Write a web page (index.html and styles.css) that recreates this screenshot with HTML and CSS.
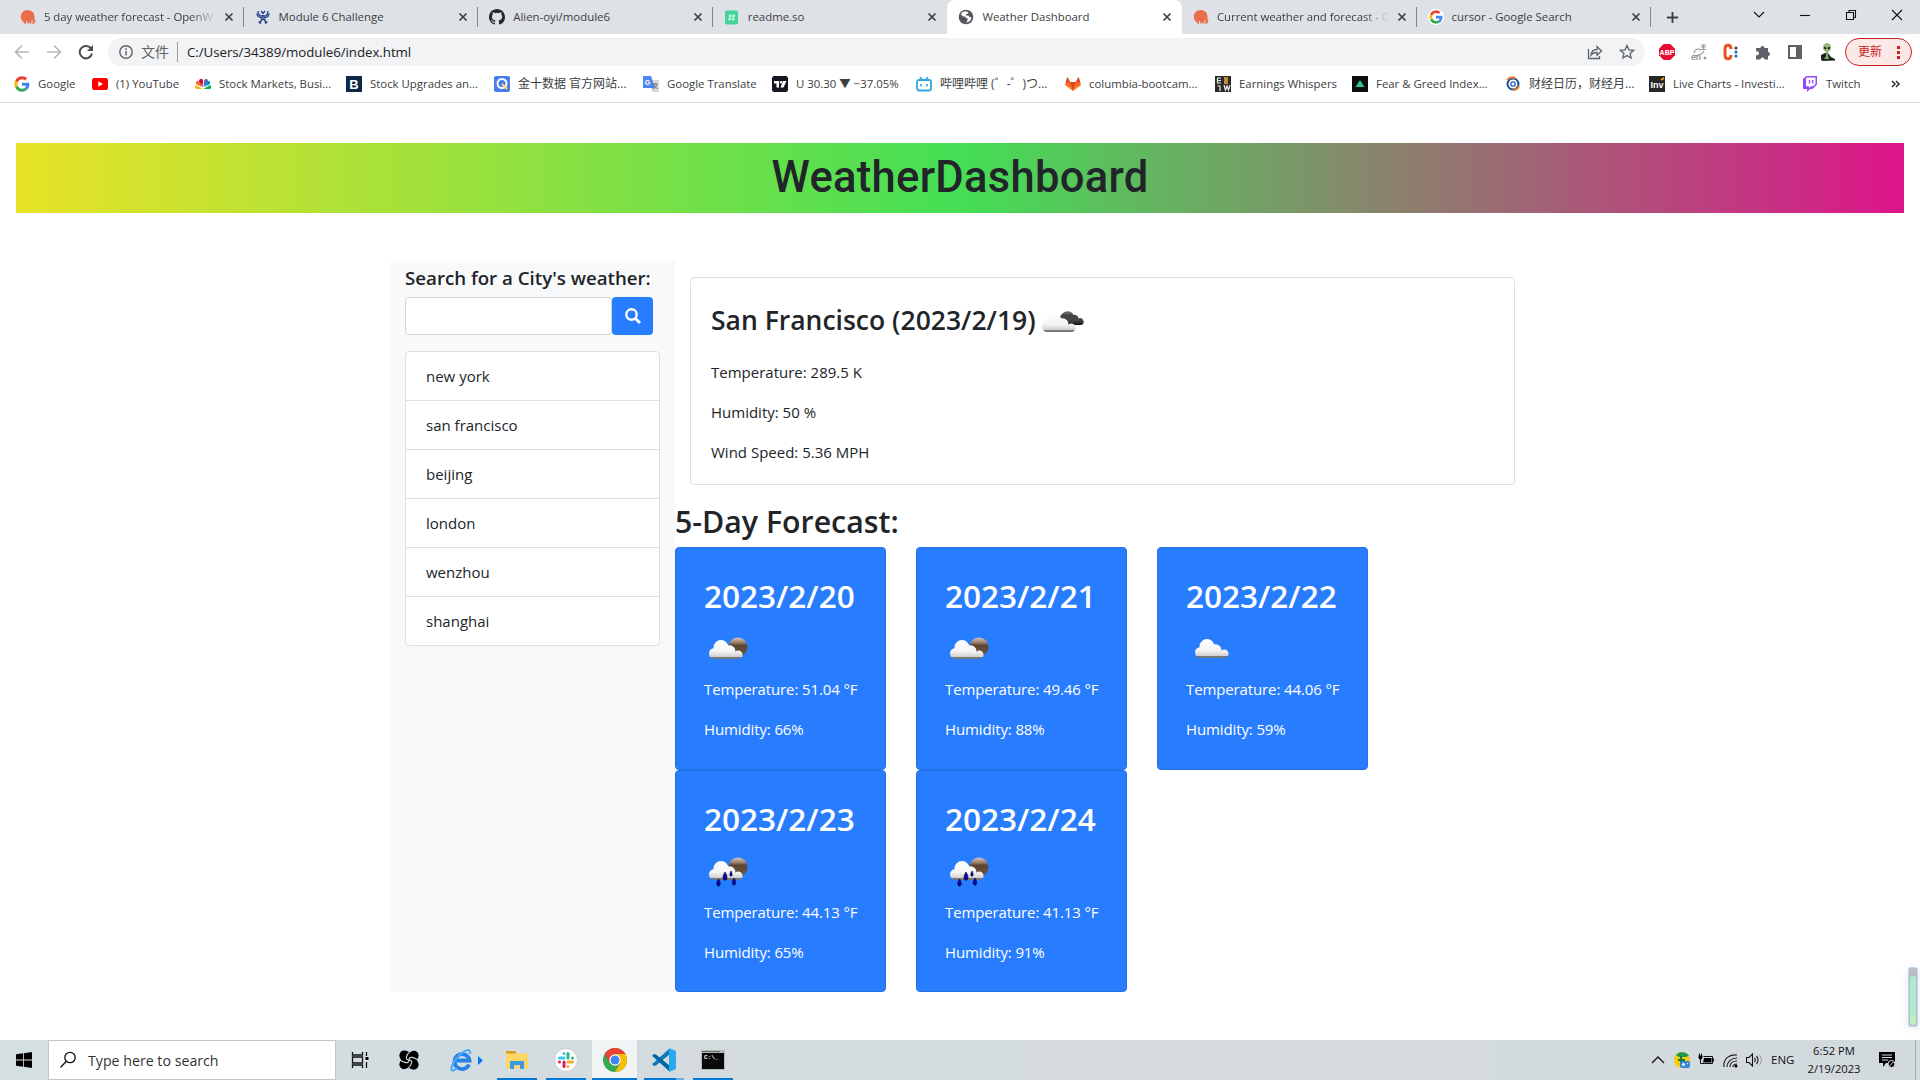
FILE: index.html
```html
<!DOCTYPE html>
<html lang="en">
<head>
<meta charset="utf-8">
<title>Weather Dashboard</title>
<link rel="stylesheet" href="styles.css">
</head>
<body>
<svg class="defs" width="0" height="0" aria-hidden="true">
  <defs>
    <linearGradient id="cloudFill" x1="0" y1="0" x2="0" y2="1"><stop offset="0" stop-color="#fff"/><stop offset=".6" stop-color="#f4f4f4"/><stop offset=".87" stop-color="#d2d2d2"/><stop offset=".92" stop-color="#777"/><stop offset="1" stop-color="#777"/></linearGradient>
    <linearGradient id="darkFill" x1="0" y1="0" x2="0" y2="1"><stop offset="0" stop-color="#777"/><stop offset=".3" stop-color="#444"/><stop offset=".7" stop-color="#444"/><stop offset="1" stop-color="#111"/></linearGradient>
    <linearGradient id="moonFill" x1="0" y1="0" x2="0" y2="1"><stop offset="0" stop-color="#d9c9bd"/><stop offset=".3" stop-color="#8d7462"/><stop offset=".4" stop-color="#5c4432"/><stop offset="1" stop-color="#70563c"/></linearGradient>
    <path id="puff" fill="url(#cloudFill)" d="M9.500 24.500a7.500 7.500 0 1 0 15 0a7.500 7.500 0 1 0-15 0zM5 30.500a5.500 5.500 0 1 0 11 0a5.500 5.500 0 1 0-11 0zM20 28a5.700 5.700 0 1 0 11.400 0a5.700 5.700 0 1 0-11.400 0zM30 31.700a4.300 4.300 0 1 0 8.600 0a4.300 4.300 0 1 0-8.600 0zM10.500 28v8h23.800v-7H24z"/>
    <symbol id="google" viewBox="0 0 48 48"><path fill="#4285f4" d="M46 24.500c0-1.600-.1-3.100-.4-4.500H24v9h12.400c-.5 2.800-2.100 5.200-4.600 6.900l7.400 5.700C43.500 37.600 46 31.700 46 24.500z"/><path fill="#34a853" d="M24 47c6.200 0 11.400-2 15.200-5.500l-7.400-5.700c-2.100 1.400-4.700 2.200-7.800 2.200-6 0-11.100-4-12.900-9.500l-7.600 5.900C7.300 41.900 15 47 24 47z"/><path fill="#fbbc05" d="M11.100 28.500a14 14 0 0 1 0-9l-7.600-5.900a23 23 0 0 0 0 20.800z"/><path fill="#ea4335" d="M24 10c3.400 0 6.400 1.200 8.800 3.400l6.600-6.600C35.400 3.100 30.200 1 24 1 15 1 7.300 6.100 3.500 13.600l7.600 5.900C12.900 14 18 10 24 10z"/></symbol>
    <symbol id="owm" viewBox="0 0 16 16"><path fill="#eb6e4b" d="M1.500 11C-.8 5.500 3 1 7.500 1c5 0 8 4 6.800 9l1 1v2l-2 2-2-1-1.500 1-2-1-2 1.500-2-2z"/><path d="M6.500 12v3M12 11v3M9.200 13v1.500" stroke="#dee1e6" fill="none"/></symbol>
    <symbol id="x" viewBox="0 0 10 10"><path d="M1.500 1.500l7 7M8.500 1.500l-7 7" stroke="#3c4043" stroke-width="1.700"/></symbol>
    <symbol id="partly" viewBox="0 0 50 50"><circle cx="34" cy="24" r="9.500" fill="url(#moonFill)"/><use href="#puff"/></symbol>
    <symbol id="cloud" viewBox="0 0 50 50"><use href="#puff" x="4" y="-1"/></symbol>
    <symbol id="broken" viewBox="0 0 50 50"><path fill="url(#darkFill)" d="M24 30a8 8 0 0 1 1-12a6.500 6.500 0 0 1 10.500 2a4 4 0 0 1 5 3.500a3.500 3.500 0 0 1 3 6.500H32z"/><use href="#puff" x="-1" y="1"/></symbol>
    <symbol id="rain" viewBox="0 0 50 50"><circle cx="34" cy="21" r="9.500" fill="url(#moonFill)"/><use href="#puff" y="-2"/><path fill="#0a0a9c" stroke="#00004d" stroke-width=".6" d="M21 26c-7 11 7 11 0 0zM14.500 33c-6 9.500 6 9.500 0 0zM30 32c-6 9.500 6 9.500 0 0zM27 25c-4 7 4 7 0 0z"/></symbol>
  </defs>
</svg>

<header class="browser">
  <nav class="tabs">
    <div class="tab first"><svg class="fav"><use href="#owm"/></svg><span class="title fade">5 day weather forecast - OpenW</span><svg class="close"><use href="#x"/></svg></div>
    <div class="tab"><svg class="fav" viewBox="0 0 16 16"><g fill="none" stroke="#263f8f" stroke-width="1.300"><path d="M8 6v5M8 6.500C5 8 3 6 3 2M8 6.500c3 1.500 5-.5 5-4.500M7 8.500C4 9 2 7 2 4.500M9 8.500c3 .5 5-1.500 5-4M6 2l2 2.500L10 2M5.500 10.500h5M5 15l1.500-4.500M11 15l-1.500-4.500M3.500 13h2M10.500 13h2"/></g></svg><span class="title">Module 6 Challenge</span><svg class="close"><use href="#x"/></svg></div>
    <div class="tab"><svg class="fav" viewBox="0 0 16 16"><path fill="#24292f" fill-rule="evenodd" d="M8 0C3.580 0 0 3.580 0 8c0 3.540 2.290 6.530 5.470 7.590.4.070.55-.17.55-.38v-1.490c-2.010.37-2.530-.49-2.690-.94-.09-.23-.48-.94-.82-1.130-.28-.15-.68-.52-.01-.53.63-.01 1.080.58 1.230.82.72 1.210 1.870.87 2.330.66.07-.52.28-.87.51-1.070-1.780-.2-3.640-.89-3.640-3.950 0-.87.31-1.590.82-2.150-.08-.2-.36-1.020.08-2.120 0 0 .67-.21 2.200.82a7.600 7.600 0 0 1 4 0c1.530-1.040 2.200-.82 2.200-.82.44 1.100.16 1.920.08 2.120.51.56.82 1.270.82 2.150 0 3.070-1.870 3.750-3.650 3.950.29.25.54.73.54 1.480v2.190c0 .21.150.46.55.38A8 8 0 0 0 16 8c0-4.420-3.580-8-8-8z"/></svg><span class="title">Alien-oyi/module6</span><svg class="close"><use href="#x"/></svg></div>
    <div class="tab last-idle"><svg class="fav" viewBox="0 0 16 16"><rect x="1" y="1.500" width="13" height="14" rx="2" fill="#41d599"/><path d="M6.500 5L5.500 12M10 5L9 12M4.500 7h7M4 10h7" stroke="#d7fff0" stroke-width="1"/></svg><span class="title">readme.so</span><svg class="close"><use href="#x"/></svg></div>
    <div class="tab active"><svg class="fav" viewBox="0 0 16 16"><circle cx="8" cy="8" r="7.300" fill="#54585d"/><path fill="#fff" d="M7 2.300c-2 .3-3.500 1.500-4.200 3L5 7.500h2.500V9h2v2.500l-1.500 2c3-.2 5.300-2.400 5.500-5L11.500 8 10.500 6.500H8V5h1.500l1-2z"/></svg><span class="title">Weather Dashboard</span><svg class="close"><use href="#x"/></svg></div>
    <div class="tab"><svg class="fav"><use href="#owm"/></svg><span class="title fade">Current weather and forecast - C</span><svg class="close"><use href="#x"/></svg></div>
    <div class="tab"><svg class="fav round"><use href="#google"/></svg><span class="title">cursor - Google Search</span><svg class="close"><use href="#x"/></svg></div>
    <svg class="newtab" viewBox="0 0 14 14"><path d="M7 1v12M1 7h12" stroke="#3c4043" stroke-width="2"/></svg>
    <div class="window-buttons">
      <svg viewBox="0 0 12 12"><path d="M1 3l5 5 5-5"/></svg>
      <svg viewBox="0 0 12 12"><path d="M1 6.500h10"/></svg>
      <svg viewBox="0 0 12 12"><path d="M1.500 3.500h7v7h-7zM4 3.500v-2h6.500v7H8.500"/></svg>
      <svg viewBox="0 0 12 12"><path d="M1 1l10 10M11 1L1 11"/></svg>
    </div>
  </nav>

  <div class="toolbar">
    <div class="nav-buttons">
      <svg viewBox="0 0 16 16" class="off"><path d="M15 8H2M8 1.500L1.500 8 8 14.500"/></svg>
      <svg viewBox="0 0 16 16" class="off"><path d="M1 8h13M8 1.500L14.500 8 8 14.500"/></svg>
      <svg viewBox="0 0 16 16"><path d="M13.300 5A6.200 6.200 0 1 0 14 9.500"/><path d="M15 1v6H9z" fill="#4a4e52" stroke="none"/></svg>
    </div>
    <div class="address">
      <svg class="info" viewBox="0 0 14 14"><circle cx="7" cy="7" r="6.200"/><path d="M7 6v4.500M7 3.300V5"/></svg>
      <span class="scheme">文件</span>
      <span class="url">C:/Users/34389/module6/index.html</span>
      <svg class="share" viewBox="0 0 16 16"><path d="M1.500 5v9.500h11V12M4 11c.5-4 3-5.500 6-5.500V2.500L14.500 7 10 11.200V8.500c-3 0-4.500.5-6 2.500z"/></svg>
      <svg class="star" viewBox="0 0 16 16"><path d="M8 1.500l1.900 4.300 4.700.5-3.500 3.100 1 4.600L8 11.600 3.900 14l1-4.600-3.500-3.100 4.700-.5z"/></svg>
    </div>
    <div class="extensions">
      <svg viewBox="0 0 16 16"><path fill="#e40d33" d="M4.700 0h6.600L16 4.700v6.600L11.300 16H4.700L0 11.300V4.700z"/><text x="8" y="10.500" text-anchor="middle" class="abp">ABP</text></svg>
      <svg viewBox="0 0 16 16"><path d="M3 9c1-4 4-5 7-3M2 11c3 1.500 9 0 11-4M10 1h5M10 3h5M12.500 1v4M10 5.500h5" fill="none" stroke="#999" stroke-width="1.100"/><text x="0" y="16" class="en">en</text><circle cx="14" cy="14" r="1.500" fill="#999"/></svg>
      <svg viewBox="0 0 16 16"><path d="M8 5C8 0 2 0 2 5v6c0 5 6 5 6 0" fill="none" stroke="#f0501e" stroke-width="3"/><g fill="#1c6fb5"><circle cx="13" cy="4" r="1.600" fill="#444"/><circle cx="13" cy="8" r="1.600"/><circle cx="13" cy="12" r="1.600"/></g></svg>
      <svg viewBox="0 0 16 16"><path fill="#5f6368" d="M1 4h4.500a2 2 0 1 1 4 0H13v4a2 2 0 1 1 0 4v3.500H9.500a2 2 0 1 0-4 0H1V11a2 2 0 1 0 0-3.500z"/></svg>
      <svg viewBox="0 0 16 16"><path d="M2 2h12v12H2z" fill="none" stroke="#5f6368" stroke-width="2"/><path fill="#5f6368" d="M9 2h5v12H9z"/></svg>
      <svg viewBox="0 0 16 18"><path fill="#1c241f" d="M2 12l4-2h3l3 4 4 2v1.500l-13 .5-1-2z"/><path fill="#87a765" d="M7 8h2v4l1 4H5l2-3z"/><ellipse cx="8" cy="4.500" rx="4" ry="4.500" fill="#9cb878"/><path d="M5.200 4.500l2 1.200M8.800 5.700l2-1.200" stroke="#111" stroke-width="1.600"/></svg>
    </div>
    <div class="update"><span>更新</span><i></i></div>
  </div>

  <nav class="bookmarks">
    <a><svg><use href="#google"/></svg>Google</a>
    <a><svg viewBox="0 0 16 16"><rect y="2" width="16" height="12" rx="2.500" fill="#f00"/><path fill="#fff" d="M6.300 5.300v5.400L11 8z"/></svg>(1) YouTube</a>
    <a><svg viewBox="0 0 16 16"><path fill="#fcb711" d="M7.700 13L1 13a2.500 2.500 0 0 1 0-4z"/><path fill="#f37021" d="M7.200 11L1 8c-.5-3 2-4 3.500-2.500z"/><path fill="#cc004c" d="M7.500 11L4 5c.5-3 4-3 4 0z"/><path fill="#6460aa" d="M8.500 11L9 5c1-3 4-2 4 0z"/><path fill="#0089d0" d="M9 11l3-5.500C14 4 16 6 15 8z"/><path fill="#0db14b" d="M8.500 13l6.500-4c2 1 1 4 0 4z"/></svg>Stock Markets, Busi...</a>
    <a><svg viewBox="0 0 16 16"><path fill="#0b2947" d="M0 0h16v16H0z"/><text x="8" y="13" text-anchor="middle" class="bk-b">B</text></svg>Stock Upgrades an...</a>
    <a><svg viewBox="0 0 16 16"><rect width="16" height="16" rx="2" fill="#4b7bec"/><circle cx="8" cy="7.500" r="4.500" fill="none" stroke="#fff" stroke-width="2"/><path d="M8 8l5 5" stroke="#ffd47a" stroke-width="2"/></svg><span class="cjk">金十数据 官方网站...</span></a>
    <a><svg viewBox="0 0 16 16"><path fill="#d8d8d8" d="M6 4h10v12H9z"/><path fill="#4c86ee" d="M0 0h8l4 12H0z"/><path d="M9.500 8h5M12 7v2M14 8c-1 3-2 4-4 5M10.500 9l4 4" stroke="#777" fill="none"/><text x="1.800" y="9" class="gt">G</text></svg>Google Translate</a>
    <a><svg viewBox="0 0 16 16"><rect width="16" height="16" rx="2.500" fill="#131722"/><path fill="#fff" d="M2 5h5v6.500H4.500V7.500H2zM11 5h3.500l-3 6.500H8.500z"/><circle cx="9" cy="6.200" r="1.200" fill="#fff"/></svg>U 30.30 ▼ −37.05%</a>
    <a><svg viewBox="0 0 16 16"><path d="M4 1l2 2.500M12 1l-2 2.500M5 8v2.500M11 8v2.500" stroke="#2ca7e0" stroke-width="1.600"/><rect x="1" y="4" width="14" height="10.500" rx="2" fill="none" stroke="#2ca7e0" stroke-width="1.800"/></svg><span class="cjk">哔哩哔哩 (゜-゜)つ...</span></a>
    <a><svg viewBox="0 0 16 16"><path fill="#fc6d26" d="M8 15L0 9l2.500-8L5 6h6l2.500-5L16 9z"/><path fill="#e24329" d="M8 15L5 6h6zM.5 7L2.500 1 5 6zM15.500 7l-2-6L11 6z"/><path fill="#fca326" d="M8 15l-5-4h2zM8 15l5-4h-2z"/></svg>columbia-bootcam...</a>
    <a><svg viewBox="0 0 16 16"><path fill="#2c2825" d="M0 0h16v16H0z"/><path fill="#b98c42" d="M9 1h4v7H9z"/><path d="M2 2h4M2 4.500h4M2 7h4M2.500 1.500v6M9 9l1.500 5L12 10l1.500 4L15 9M2.500 10h2.500v5" fill="none" stroke="#eee" stroke-width="1.200"/></svg>Earnings Whispers</a>
    <a><svg viewBox="0 0 16 16"><path fill="#0d0d0d" d="M0 0h16v16H0z"/><path fill="#2fc49b" d="M8 4l4.500 7h-9z"/></svg>Fear &amp; Greed Index...</a>
    <a><svg viewBox="0 0 16 16"><circle cx="8" cy="8" r="5.500" fill="none" stroke="#1e4b93" stroke-width="2"/><circle cx="8" cy="8" r="2.200" fill="none" stroke="#2961ad" stroke-width="1.300"/><path d="M2 4c3-3 6-3 8-2M14 10c-1 3-3 4-6 4" stroke="#f07b30" stroke-width="2" fill="none"/></svg><span class="cjk">财经日历，财经月...</span></a>
    <a><svg viewBox="0 0 16 16"><path fill="#262626" d="M0 0h16v16H0z"/><text x="8" y="12" text-anchor="middle" class="inv">Inv</text><path d="M12 4l3-2" stroke="#f7a600" stroke-width="1.600"/></svg>Live Charts - Investi...</a>
    <a><svg viewBox="0 0 16 16"><path fill="#9146ff" d="M4 0L1 3v10h4v3l3-3h2.500L15 8.500V0z"/><path fill="#fff" d="M4 1.500h9.500V8l-2.200 2.200H9L7 12v-1.800H4z"/><path d="M7.500 4v3.500M10.700 4v3.500" stroke="#9146ff" stroke-width="1.300"/></svg>Twitch</a>
    <span class="more"><svg viewBox="0 0 10 8"><path d="M1 1l3 3-3 3M5 1l3 3-3 3"/></svg></span>
  </nav>
</header>

<main class="page">
  <h1 class="banner"><span>WeatherDashboard</span></h1>
  <div class="columns">
    <aside class="sidebar">
      <h5 class="prompt">Search for a City's weather:</h5>
      <form class="search">
        <input type="text" class="city-input" aria-label="City">
        <button type="button" class="search-btn" aria-label="Search"><svg viewBox="0 0 16 16"><circle cx="6.500" cy="6.500" r="5.200" fill="none" stroke="#fff" stroke-width="2.400"/><path d="M10.500 10.500l4.500 4.500" stroke="#fff" stroke-width="2.800"/></svg></button>
      </form>
      <ul class="history">
        <li>new york</li><li>san francisco</li><li>beijing</li><li>london</li><li>wenzhou</li><li>shanghai</li>
      </ul>
    </aside>
    <section class="results">
      <article class="current">
        <h3><span>San Francisco (2023/2/19)</span><svg class="wx"><use href="#broken"/></svg></h3>
        <p>Temperature: 289.5 K</p>
        <p>Humidity: 50 %</p>
        <p>Wind Speed: 5.36 MPH</p>
      </article>
      <h2 class="forecast-title">5-Day Forecast:</h2>
      <div class="forecast">
        <article class="day"><h2>2023/2/20</h2><svg class="wx"><use href="#partly"/></svg><p>Temperature: 51.04 °F</p><p>Humidity: 66%</p></article>
        <article class="day"><h2>2023/2/21</h2><svg class="wx"><use href="#partly"/></svg><p>Temperature: 49.46 °F</p><p>Humidity: 88%</p></article>
        <article class="day"><h2>2023/2/22</h2><svg class="wx"><use href="#cloud"/></svg><p>Temperature: 44.06 °F</p><p>Humidity: 59%</p></article>
        <article class="day"><h2>2023/2/23</h2><svg class="wx"><use href="#rain"/></svg><p>Temperature: 44.13 °F</p><p>Humidity: 65%</p></article>
        <article class="day"><h2>2023/2/24</h2><svg class="wx"><use href="#rain"/></svg><p>Temperature: 41.13 °F</p><p>Humidity: 91%</p></article>
      </div>
    </section>
  </div>
  <div class="meter"><i></i></div>
</main>

<footer class="taskbar">
  <div class="start"><svg viewBox="0 0 16 16"><path d="M0 2.300L7.200 1.300v6.300H0zM8 1.200L16 0v7.600H8zM0 8.400h7.200v6.300L0 13.700zM8 8.400h8V16L8 14.800z"/></svg></div>
  <div class="find"><svg viewBox="0 0 18 18"><circle cx="11" cy="6.500" r="5.200"/><path d="M7.300 10.200L1.500 16.500"/></svg><span>Type here to search</span></div>
  <div class="apps">
    <div class="app"><svg class="small" viewBox="0 0 18 18"><path d="M1.500 1v3h10V1M1.500 17v-3h10v3M1.500 6h10v6h-10zM15.500 1v4M15.500 11v6" fill="none" stroke="#111" stroke-width="1.300"/><path d="M14.500 6h3v3h-3z"/></svg></div>
    <div class="app"><svg class="swirl" viewBox="0 0 24 24"><rect x="3" y="3" width="18" height="18" rx="6"/><circle cx="7" cy="7" r="5.500"/><circle cx="17.500" cy="7" r="5"/><circle cx="6.500" cy="17" r="5"/><circle cx="17" cy="17" r="5.500"/><g fill="none" stroke="#d4dde0" stroke-width="1.200"><path d="M12 12C7 12 9 6 14 2M12 12c0-5 6-3 11 1M12 12c5 0 3 6-2 10M12 12c0 5-6 3-11-1"/></g></svg></div>
    <div class="app browser-app"><svg class="ie" viewBox="0 0 34 24"><path d="M20 16.500A7.500 7.500 0 1 1 20.500 12.500H7" fill="none" stroke="#2584ea" stroke-width="3.800"/><path d="M8 20C0 27 1 18 8 10S22-1 21 6" fill="none" stroke="#4da5fa" stroke-width="2"/><path fill="#0078f0" d="M29 8v9l5-4.500z"/></svg></div>
    <div class="app run"><svg viewBox="0 0 24 24"><path fill="#d99b16" d="M1 3h9l2 3h-11z"/><path fill="#ffd766" d="M1 5.500h22v15H1z"/><path fill="#3b99df" d="M5 13h14v8h-4v-4H9v4H5z"/></svg></div>
    <div class="app run"><svg viewBox="0 0 24 24"><circle cx="12" cy="12" r="11.500" fill="#fff" stroke="#c8cccd"/><g stroke-width="3" stroke-linecap="round" fill="none"><path stroke="#36c5f0" d="M10 5.500v0M5.500 10H10"/><path stroke="#2eb67d" d="M14 5.500V10M18.500 10v0"/><path stroke="#ecb22e" d="M14 14h4.500M14 18.500v0"/><path stroke="#e01e5a" d="M10 14v4.500M5.500 14v0"/></g></svg></div>
    <div class="app run current-app"><svg viewBox="0 0 24 24"><circle cx="12" cy="12" r="12" fill="#34a853"/><path fill="#ea4335" d="M1.600 6a12 12 0 0 1 20.800 0H12L6.800 15z"/><path fill="#fbbc04" d="M22.400 6A12 12 0 0 1 12 24l5.200-9L12 6z"/><circle cx="12" cy="12" r="5.700" fill="#fff"/><circle cx="12" cy="12" r="4.500" fill="#4285f4"/></svg></div>
    <div class="app run multi"><svg viewBox="0 0 24 24"><path fill="#1478bd" d="M17 1L2 14.500 0 16l2 2 2-.5L18 6z"/><path fill="#0067a8" d="M17 23L2 9.500 0 8l2-2 2 .5L18 18z"/><path fill="#2ca8ef" d="M17 0l7 3v18l-7 3z"/></svg></div>
    <div class="app run"><svg viewBox="0 0 24 24"><path fill="#b5babd" d="M0 2h24v20H0z"/><path fill="#090909" d="M1 5h22v16H1z"/><path fill="#666" d="M1 3h18v1H1z"/><text x="3" y="11" class="cmd">C:\_</text></svg></div>
  </div>
  <div class="tray">
    <svg class="chev" viewBox="0 0 14 10"><path d="M1 8l6-6 6 6"/></svg>
    <svg viewBox="0 0 16 16"><circle cx="8" cy="8" r="8" fill="#f2cb13"/><path fill="#1f9c4b" d="M2 3a8 8 0 0 1 13 1L11 5H5z"/><path d="M7 4v7M4 8h7" stroke="#187a37" stroke-width="2"/><rect x="6" y="9" width="10" height="7" rx="2" fill="#3885dc"/><path d="M8 12.500h3M9.500 11v3M13.500 11v1" stroke="#fff" stroke-width="1.300"/></svg>
    <svg viewBox="0 0 16 16"><path d="M5.500 4.500h9v7h-8M15.500 6.500v3M2.500 7v4.500h4M1.500 1.500V4M3.500 1.500V4" fill="none" stroke="#111"/><path d="M6 6h7.500v4.500H5z"/><path d="M.5 3.500h4v2l-1 2h-2l-1-2z"/></svg>
    <svg viewBox="0 0 16 16"><path d="M2 15C1 7 7 2 15 3M5 15c0-5 4-9 10-9M8 15c0-4 3-6 7-6M11 15c0-2 2-3 4-3" fill="none" stroke="#222" stroke-width="1.200"/><circle cx="14" cy="14" r="1.500"/></svg>
    <svg viewBox="0 0 16 16"><path d="M.5 5.500H3L6.500 2v12L3 10.500H.500zM8.500 6c1 1 1 3 0 4M10.500 4c2 2 2 6 0 8" fill="none" stroke="#111" stroke-width="1.100"/><path d="M13 2.500c3 3 3 8 0 11" fill="none" stroke="#999"/></svg>
    <span class="lang">ENG</span>
    <div class="clock"><span>6:52 PM</span><span>2/19/2023</span></div>
    <svg class="notice" viewBox="0 0 16 16"><path d="M0 0h16v11H7l-3 4v-4H0z"/><path d="M3 3h10M3 5.500h10M3 8h6" stroke="#d7dde0"/><circle cx="12.500" cy="12" r="3.500" stroke="#d7dde0"/><path d="M10.500 14l4-4" stroke="#d7dde0"/></svg>
  </div>
</footer>
</body>
</html>
```
FILE: styles.css
```css
* { box-sizing: border-box; }
body { margin: 0; width: 1920px; height: 1080px; overflow: hidden; display: flex; flex-direction: column; background: #fff; color: #212529; font: 15px/24px "Open Sans", "Noto Sans CJK SC", sans-serif; }
h1, h2, h3, h5, p, ul { margin: 0; padding: 0; }
svg { display: block; flex: none; }
.defs { height: 0; }

.browser { height: 103px; flex: none; border-bottom: 1px solid #dadce0; font-size: 11.400px; color: #3c4043; }

.tabs { height: 34px; display: flex; align-items: center; background: #dee1e6; padding-left: 9px; }
.tab { width: 234.600px; height: 34px; padding: 0 6px 0 11px; display: flex; align-items: center; gap: 8px; position: relative; }
.tab::after { content: ""; position: absolute; right: 0; top: 7px; width: 1px; height: 20px; background: #85888d; }
.tab.last-idle::after, .tab.active::after { display: none; }
.fav { width: 16px; height: 16px; }
.fav.round { background: #fff; border-radius: 50%; padding: 1px; }
.title { flex: 1; white-space: nowrap; }
.fade { letter-spacing: -.05px; -webkit-mask-image: linear-gradient(90deg, #000 85%, transparent); mask-image: linear-gradient(90deg, #000 85%, transparent); }
.close { width: 10px; height: 10px; margin-right: 4px; }
.active { background: #fff; border-radius: 8px 8px 0 0; }
.newtab { width: 13px; height: 13px; margin-left: 15px; }
.window-buttons { margin-left: auto; display: flex; gap: 34px; padding-right: 17px; margin-top: -5px; }
.window-buttons svg { width: 12px; height: 12px; fill: none; stroke: #111; stroke-width: 1.100; }

.toolbar { height: 36px; display: flex; align-items: center; padding: 0 8px 0 14px; }
.nav-buttons { display: flex; gap: 16px; width: 94px; }
.nav-buttons svg { width: 16px; height: 16px; fill: none; stroke: #4a4e52; stroke-width: 2; }
.nav-buttons .off { stroke: #b5b7ba; stroke-width: 1.600; }
.address { width: 1537px; height: 28px; border-radius: 14px; background: #f1f3f4; display: flex; align-items: center; padding: 0 10px 0 11px; font-size: 13.300px; color: #202124; }
.info { width: 14px; height: 14px; fill: none; stroke: #5f6368; stroke-width: 1.400; }
.scheme { margin-left: 8px; width: 37px; font-size: 14px; line-height: 20px; color: #5f6368; border-right: 1px solid #9aa0a6; }
.url { margin-left: 9px; letter-spacing: -.05px; }
.share { width: 16px; height: 16px; margin-left: auto; }
.star { width: 16px; height: 16px; margin-left: 16px; }
.share, .star { fill: none; stroke: #5f6368; stroke-width: 1.300; }
.extensions { display: flex; gap: 16px; margin-left: 14px; }
.extensions svg { width: 16px; height: 18px; }
.abp { font: bold 7px "Liberation Sans", sans-serif; fill: #fff; }
.en { font: bold 8px "Open Sans", sans-serif; fill: #999; }
.update { margin-left: auto; width: 67px; height: 28px; border: 1px solid #c5221f; border-radius: 14px; background: #fce8e6; color: #c5221f; font-size: 12px; display: flex; align-items: center; justify-content: space-between; padding: 0 11px 0 12px; }
.update i { width: 3px; height: 15px; background: radial-gradient(circle, #c5221f 1.500px, transparent 1.800px) 0 0 / 3px 5px; }

.bookmarks { height: 28px; margin-left: 14px; display: grid; grid-template-columns: 78px 103px 151px 148px 149px 129px 144px 149px 150px 137px 153px 144px 153px 89px 12px; align-items: center; }
.bookmarks a { display: flex; align-items: center; gap: 8px; white-space: nowrap; }
.bookmarks a svg { width: 16px; height: 16px; }
.cjk { font-size: 12px; }
.bk-b { font: bold 13px "Liberation Sans", sans-serif; fill: #fff; }
.gt { font: bold 7px "Liberation Sans", sans-serif; fill: #fff; }
.inv { font: bold 9px "Liberation Sans", sans-serif; fill: #fff; }
.more svg { width: 10px; height: 8px; fill: none; stroke: #333; stroke-width: 1.500; }

.page { height: 937px; flex: none; padding: 40px 16px 0; position: relative; }
.banner { height: 70px; display: flex; justify-content: center; align-items: center; background: linear-gradient(90deg, #e8e327, #44df55 50%, #dd148a); font: 500 43.500px/54px Roboto, sans-serif; letter-spacing: .3px; color: #212529; }
.columns { width: 1140px; margin: 48px auto 0; display: grid; grid-template-columns: 285px 855px; height: 731px; }
.sidebar { background: #f8f9fa; padding: 5px 15px 0; }
.prompt { font-size: 18.700px; line-height: 24px; font-weight: 600; white-space: nowrap; margin-bottom: 7px; }
.search { display: flex; margin-bottom: 16px; }
.city-input { width: 207px; height: 38px; border: 1px solid #ced4da; border-radius: 4px; background: #fff; }
.search-btn { width: 41px; height: 38px; border: 0; border-radius: 4px; background: #287dff; padding: 0 13px; }
.search-btn svg { width: 16px; height: 16px; }
.history { list-style: none; background: #fff; border: 1px solid #dfdfdf; border-radius: 4px; width: 255px; }
.history li { height: 49px; padding: 12px 20px; border-bottom: 1px solid #dfdfdf; }
.history li:last-child { height: 48px; border: 0; }
.current { margin: 16px 15px 0; width: 825px; height: 208px; border: 1px solid #dfdfdf; border-radius: 4px; padding: 20px; }
.current h3 { display: flex; align-items: center; gap: 2px; height: 50px; margin-top: -3px; font-size: 26.500px; font-weight: 600; margin-bottom: 15px; }
.wx { width: 50px; height: 50px; }
.current p { margin-bottom: 16px; }
.forecast-title { font-size: 30.300px; line-height: 41px; font-weight: 600; margin: 16px 0 5px; }
.forecast { display: grid; grid-template-columns: repeat(3, 211px); column-gap: 30px; grid-auto-rows: 222.500px; }
.day { background: #287dff; color: #fff; border: 1px solid #2470e5; border-radius: 4px; padding: 29px 28px 0; }
.day h2 { font-size: 31.500px; line-height: 38px; font-weight: 600; margin-bottom: 8px; }
.day .wx { margin-bottom: 4px; }
.day p { margin-bottom: 16px; white-space: nowrap; letter-spacing: -.12px; }
.meter { position: absolute; right: 2px; top: 864px; width: 10px; height: 60px; border: 1px solid #b8dcf8; background: #b9bcc0; border-radius: 3px; padding: 8px 1px 1px; box-shadow: 0 2px 8px #e5e5f5; }
.meter i { display: block; height: 49px; border-radius: 3px; background: linear-gradient(#b1eacb 75%, #c4f3bd); }

.taskbar { height: 40px; flex: none; background: linear-gradient(90deg, #d4dfe2, #d3dbdf 35%, #d5dbde 65%, #d2dadd); display: flex; align-items: stretch; color: #111; }
.start { width: 48px; padding: 12px 0 0 16px; }
.start svg { width: 16px; height: 16px; }
.find { width: 288px; background: #fff; border: 1px solid #c2c6c8; display: flex; align-items: center; padding-left: 10px; gap: 11px; font-size: 14.200px; color: #333; }
.find svg { width: 18px; height: 18px; fill: none; stroke: #111; stroke-width: 1.300; }
.find span { padding-top: 1px; }
.apps { display: flex; margin-left: -1px; }
.app { width: 49px; display: flex; align-items: center; justify-content: center; }
.app svg { width: 24px; height: 24px; }
.app svg.small { width: 18px; height: 18px; }
.app svg.swirl { width: 22px; height: 22px; }
.app svg.ie { width: 34px; margin-left: 6px; }
.browser-app { width: 59px; }
.run { background: linear-gradient(#0078d7, #0078d7) 50% 100% / 40px 2px no-repeat; }
.current-app { background: linear-gradient(#0078d7, #0078d7) 50% 100% / 45px 2px no-repeat, linear-gradient(#f1f4f5, #f1f4f5) 50% 0 / 45px 40px no-repeat; }
.multi { background: linear-gradient(90deg, #0078d7 80%, #69aee5 80%) 50% 100% / 40px 2px no-repeat; }
.cmd { font: bold 6px "Liberation Mono", monospace; fill: #fff; }
.tray { margin-left: auto; display: flex; align-items: center; gap: 8px; padding-right: 20px; border-right: 1px solid #a5abad; margin-right: 4px; }
.tray svg { width: 16px; height: 16px; }
.tray .chev { width: 14px; height: 10px; fill: none; stroke: #111; stroke-width: 1.300; margin-right: 1px; }
.lang { font-size: 11.500px; width: 24px; margin-left: 1px; }
.clock { width: 66px; display: flex; flex-direction: column; align-items: center; font-size: 11.200px; line-height: 18px; margin: 0 4px 0 -2px; }
```
